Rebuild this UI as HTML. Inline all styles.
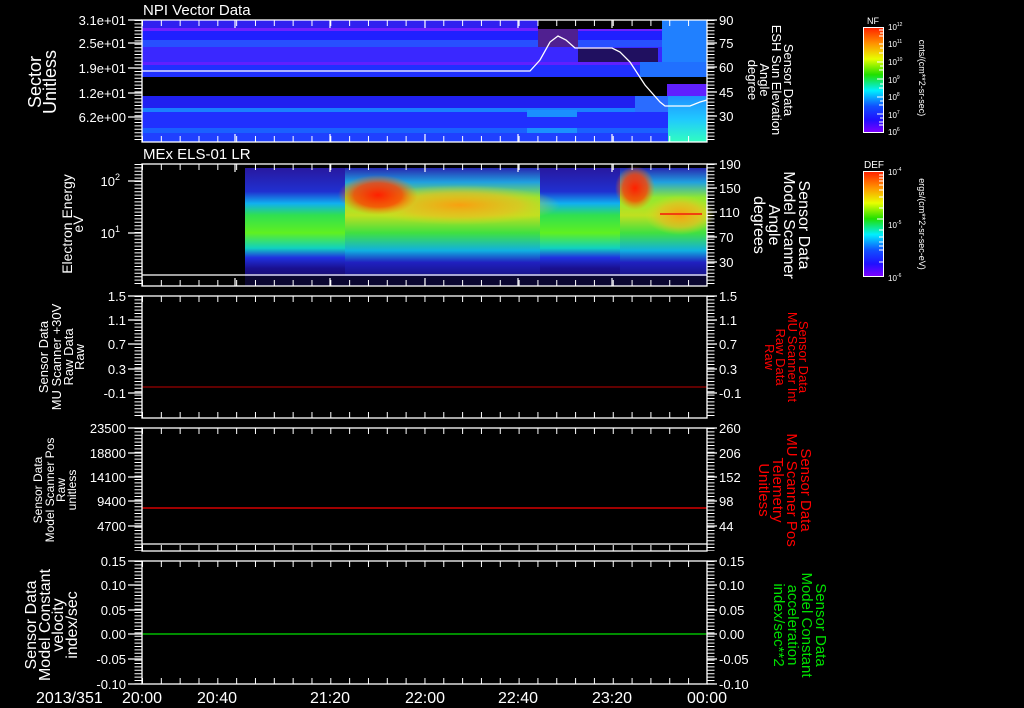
<!DOCTYPE html>
<html><head><meta charset="utf-8"><style>
html,body{margin:0;padding:0;background:#000;width:1024px;height:708px;overflow:hidden}
svg{display:block}
text{font-family:"Liberation Sans",sans-serif;fill:#fff}
</style></head><body>
<svg width="1024" height="708" viewBox="0 0 1024 708" xmlns="http://www.w3.org/2000/svg">
<defs>
<linearGradient id="cb" x1="0" y1="0" x2="0" y2="1">
<stop offset="0" stop-color="#ff2000"/><stop offset="0.15" stop-color="#ff9000"/><stop offset="0.3" stop-color="#e8ff00"/><stop offset="0.45" stop-color="#20e000"/><stop offset="0.6" stop-color="#00f0ff"/><stop offset="0.75" stop-color="#1050ff"/><stop offset="0.88" stop-color="#2010ff"/><stop offset="1" stop-color="#8000ff"/>
</linearGradient>
<linearGradient id="sp1" x1="0" y1="0" x2="0" y2="1">
<stop offset="0" stop-color="#2818a0"/><stop offset="0.2" stop-color="#2030d0"/><stop offset="0.3" stop-color="#10b0f0"/><stop offset="0.4" stop-color="#30e050"/><stop offset="0.55" stop-color="#60f020"/><stop offset="0.68" stop-color="#10d0c0"/><stop offset="0.76" stop-color="#2030e0"/><stop offset="0.85" stop-color="#1a1090"/><stop offset="1" stop-color="#100850"/>
</linearGradient>
<linearGradient id="sp2" x1="0" y1="0" x2="0" y2="1">
<stop offset="0" stop-color="#2828b0"/><stop offset="0.12" stop-color="#20a0e0"/><stop offset="0.25" stop-color="#90e830"/><stop offset="0.4" stop-color="#c0e020"/><stop offset="0.55" stop-color="#40e040"/><stop offset="0.7" stop-color="#10b0e0"/><stop offset="0.8" stop-color="#2020c0"/><stop offset="1" stop-color="#100860"/>
</linearGradient>
<linearGradient id="sph" x1="0" y1="0" x2="1" y2="0">
<stop offset="0" stop-color="#000" stop-opacity="0"/><stop offset="0.5" stop-color="#000" stop-opacity="0"/><stop offset="1" stop-color="#000" stop-opacity="0"/>
</linearGradient>
<radialGradient id="red"><stop offset="0" stop-color="#ff2000"/><stop offset="0.6" stop-color="#ff4000" stop-opacity="0.8"/><stop offset="1" stop-color="#ff8000" stop-opacity="0"/></radialGradient>
<radialGradient id="yel"><stop offset="0" stop-color="#f8a010"/><stop offset="0.6" stop-color="#e8c020" stop-opacity="0.7"/><stop offset="1" stop-color="#d0e020" stop-opacity="0"/></radialGradient>
<linearGradient id="cy" x1="0" y1="0" x2="0" y2="1">
<stop offset="0" stop-color="#2090ff"/><stop offset="0.5" stop-color="#20c8ff"/><stop offset="1" stop-color="#30ffc0"/>
</linearGradient>
</defs>

<!-- Panel 1 data -->
<g>
<rect x="142" y="20" width="565" height="8" fill="#3020f0"/>
<rect x="142" y="28" width="565" height="3" fill="#7020ff"/>
<rect x="142" y="31" width="565" height="9" fill="#2020ff"/>
<rect x="142" y="40" width="565" height="7" fill="#2850ff"/>
<rect x="142" y="47" width="565" height="15" fill="#3a28ff"/>
<rect x="142" y="62" width="565" height="3" fill="#6020ff"/>
<rect x="142" y="65" width="565" height="12" fill="#2030ff"/>
<rect x="142" y="96" width="565" height="12" fill="#2020f0"/>
<rect x="142" y="108" width="565" height="4" fill="#1a80ff"/>
<rect x="142" y="112" width="565" height="16" fill="#2030ff"/>
<rect x="142" y="128" width="565" height="5" fill="#1a60ff"/>
<rect x="142" y="133" width="565" height="9" fill="#2040ff"/>
<rect x="527" y="110" width="50" height="7" fill="#1a90ff"/>
<rect x="527" y="128" width="50" height="5" fill="#1a90ff"/>
<rect x="538" y="20" width="128" height="9" fill="#000"/>
<rect x="538" y="29" width="40" height="18" fill="#502090"/>
<rect x="578" y="48" width="80" height="14" fill="#201060"/>
<rect x="640" y="62" width="67" height="15" fill="#2070ff"/>
<rect x="662" y="20" width="45" height="42" fill="#2080ff"/>
<rect x="667" y="84" width="40" height="12" fill="#6020ff"/>
<rect x="635" y="96" width="72" height="16" fill="#2a6cff"/>
<rect x="668" y="96" width="39" height="46" fill="url(#cy)"/>
<polyline points="142,71 530,71 540,60 550,42 558,36 566,40 575,48 612,48 620,52 630,62 645,85 660,102 665,106 690,106 700,102 707,100" fill="none" stroke="#fff" stroke-width="1.3"/>
</g>

<!-- Panel 2 data -->
<g>
<rect x="245" y="168" width="100" height="118" fill="url(#sp1)"/>
<rect x="345" y="168" width="195" height="118" fill="url(#sp2)"/>
<rect x="540" y="168" width="80" height="118" fill="url(#sp1)"/>
<rect x="620" y="168" width="87" height="118" fill="url(#sp2)"/>
<ellipse cx="460" cy="205" rx="100" ry="20" fill="url(#yel)"/>
<ellipse cx="378" cy="195" rx="40" ry="20" fill="url(#red)"/>
<ellipse cx="635" cy="188" rx="20" ry="22" fill="url(#red)"/>
<ellipse cx="680" cy="215" rx="35" ry="20" fill="url(#yel)"/>
<rect x="660" y="213" width="42" height="2" fill="#f04010"/>
<rect x="245" y="276" width="462" height="10" fill="#0a0630"/>
<line x1="142" y1="275" x2="707" y2="275" stroke="#fff" stroke-width="1.3"/>
</g>

<!-- Data lines -->
<line x1="142" y1="387" x2="707" y2="387" stroke="#c00000" stroke-width="1"/>
<line x1="142" y1="508" x2="707" y2="508" stroke="#ff0000" stroke-width="1.3"/>
<line x1="142" y1="634" x2="707" y2="634" stroke="#00e000" stroke-width="1.3"/>
<line x1="142" y1="544" x2="707" y2="544" stroke="#fff" stroke-width="1.3"/>

<!-- Frames & ticks -->
<g stroke="#fff" fill="none" stroke-width="1.3">
<rect x="142" y="20" width="565" height="122"/>
<rect x="142" y="164" width="565" height="122"/>
<rect x="142" y="296" width="565" height="122"/>
<rect x="142" y="428" width="565" height="123"/>
<rect x="142" y="561" width="565" height="123"/>
</g>
<g stroke="#fff" stroke-width="7" stroke-dasharray="1 2.4">
<line x1="138" y1="20" x2="138" y2="142"/><line x1="711" y1="20" x2="711" y2="142"/>
<line x1="138" y1="164" x2="138" y2="286"/><line x1="711" y1="164" x2="711" y2="286"/>
<line x1="138" y1="296" x2="138" y2="418"/><line x1="711" y1="296" x2="711" y2="418"/>
<line x1="138" y1="428" x2="138" y2="551"/><line x1="711" y1="428" x2="711" y2="551"/>
<line x1="138" y1="561" x2="138" y2="684"/><line x1="711" y1="561" x2="711" y2="684"/>
</g>
<g stroke="#fff" stroke-width="1.2">
<path d="M128 20h14M128 43h14M128 68h14M128 93h14M128 117h14M707 20h10M707 43h10M707 67h10M707 92h10M707 116h10"/>
<path d="M128 181h14M128 233h14M707 164h10M707 188h10M707 212h10M707 237h10M707 262h10"/>
<path d="M128 296h14M128 320h14M128 344h14M128 369h14M128 393h14M707 296h10M707 320h10M707 344h10M707 369h10M707 393h10"/>
<path d="M128 428h14M128 453h14M128 477h14M128 501h14M128 526h14M707 428h10M707 453h10M707 477h10M707 501h10M707 526h10"/>
<path d="M128 561h14M128 585h14M128 610h14M128 634h14M128 659h14M128 684h14M707 561h10M707 585h10M707 610h10M707 634h10M707 659h10M707 684h10"/>
</g>
<g stroke="#fff" stroke-width="6" stroke-dasharray="1 17.83">
<line x1="142" y1="23" x2="707" y2="23"/><line x1="142" y1="139" x2="707" y2="139"/>
<line x1="142" y1="167" x2="707" y2="167"/><line x1="142" y1="283" x2="707" y2="283"/>
<line x1="142" y1="299" x2="707" y2="299"/><line x1="142" y1="415" x2="707" y2="415"/>
<line x1="142" y1="431" x2="707" y2="431"/><line x1="142" y1="548" x2="707" y2="548"/>
<line x1="142" y1="564" x2="707" y2="564"/><line x1="142" y1="681" x2="707" y2="681"/>
</g>
<g stroke="#fff" stroke-width="1.2">
<path d="M235 20v8M330 20v8M425 20v8M518 20v8M612 20v8M235 142v-8M330 142v-8M425 142v-8M518 142v-8M612 142v-8"/>
<path d="M235 164v8M330 164v8M425 164v8M518 164v8M612 164v8M235 286v-8M330 286v-8M425 286v-8M518 286v-8M612 286v-8"/>
</g>

<!-- Titles -->
<text x="143" y="15" font-size="15">NPI Vector Data</text>
<text x="143" y="159" font-size="15">MEx ELS-01 LR</text>

<!-- Left tick labels -->
<g font-size="13" text-anchor="end">
<text x="126" y="25">3.1e+01</text><text x="126" y="48">2.5e+01</text><text x="126" y="73">1.9e+01</text><text x="126" y="98">1.2e+01</text><text x="126" y="122">6.2e+00</text>
<text x="120" y="186">10<tspan font-size="9" dy="-6">2</tspan></text><text x="120" y="238">10<tspan font-size="9" dy="-6">1</tspan></text>
<text x="126" y="301">1.5</text><text x="126" y="325">1.1</text><text x="126" y="349">0.7</text><text x="126" y="374">0.3</text><text x="126" y="398">-0.1</text>
<text x="126" y="433">23500</text><text x="126" y="458">18800</text><text x="126" y="482">14100</text><text x="126" y="506">9400</text><text x="126" y="531">4700</text>
<text x="126" y="566">0.15</text><text x="126" y="590">0.10</text><text x="126" y="615">0.05</text><text x="126" y="639">0.00</text><text x="126" y="664">-0.05</text><text x="126" y="689">-0.10</text>
</g>
<!-- Right tick labels -->
<g font-size="13">
<text x="719" y="25">90</text><text x="719" y="48">75</text><text x="719" y="72">60</text><text x="719" y="97">45</text><text x="719" y="121">30</text>
<text x="719" y="169">190</text><text x="719" y="193">150</text><text x="719" y="217">110</text><text x="719" y="242">70</text><text x="719" y="267">30</text>
<text x="719" y="301">1.5</text><text x="719" y="325">1.1</text><text x="719" y="349">0.7</text><text x="719" y="374">0.3</text><text x="719" y="398">-0.1</text>
<text x="719" y="433">260</text><text x="719" y="458">206</text><text x="719" y="482">152</text><text x="719" y="506">98</text><text x="719" y="531">44</text>
<text x="719" y="566">0.15</text><text x="719" y="590">0.10</text><text x="719" y="615">0.05</text><text x="719" y="639">0.00</text><text x="719" y="664">-0.05</text><text x="719" y="689">-0.10</text>
</g>

<!-- Left axis titles -->
<g text-anchor="middle">
<g font-size="18"><text transform="translate(41,82) rotate(-90)">Sector</text><text transform="translate(56,82) rotate(-90)">Unitless</text></g>
<g font-size="14"><text transform="translate(72,224) rotate(-90)">Electron Energy</text><text transform="translate(83,224) rotate(-90)">eV</text></g>
<g font-size="13"><text transform="translate(48,357) rotate(-90)">Sensor Data</text><text transform="translate(61,357) rotate(-90)">MU Scanner +30V</text><text transform="translate(73,357) rotate(-90)">Raw Data</text><text transform="translate(84,357) rotate(-90)">Raw</text></g>
<g font-size="12"><text transform="translate(42,490) rotate(-90)">Sensor Data</text><text transform="translate(54,490) rotate(-90)">Model Scanner Pos</text><text transform="translate(65,490) rotate(-90)">Raw</text><text transform="translate(76,490) rotate(-90)">unitless</text></g>
<g font-size="16"><text transform="translate(36,625) rotate(-90)">Sensor Data</text><text transform="translate(50,625) rotate(-90)">Model Constant</text><text transform="translate(63,625) rotate(-90)">velocity</text><text transform="translate(77,625) rotate(-90)">index/sec</text></g>
</g>
<!-- Right axis titles -->
<g text-anchor="middle">
<g font-size="13"><text transform="translate(784,80) rotate(90)">Sensor Data</text><text transform="translate(772,80) rotate(90)">ESH Sun Elevation</text><text transform="translate(760,80) rotate(90)">Angle</text><text transform="translate(748,80) rotate(90)">degree</text></g>
<g font-size="16"><text transform="translate(799,225) rotate(90)">Sensor Data</text><text transform="translate(784,225) rotate(90)">Model Scanner</text><text transform="translate(769,225) rotate(90)">Angle</text><text transform="translate(754,225) rotate(90)">degrees</text></g>
<g font-size="13"><text style="fill:#ff0000" transform="translate(799,357) rotate(90)">Sensor Data</text><text style="fill:#ff0000" transform="translate(788,357) rotate(90)">MU Scanner Int</text><text style="fill:#ff0000" transform="translate(776,357) rotate(90)">Raw Data</text><text style="fill:#ff0000" transform="translate(765,357) rotate(90)">Raw</text></g>
<g font-size="15"><text style="fill:#ff0000" transform="translate(801,490) rotate(90)">Sensor Data</text><text style="fill:#ff0000" transform="translate(787,490) rotate(90)">MU Scanner Pos</text><text style="fill:#ff0000" transform="translate(773,490) rotate(90)">Telemetry</text><text style="fill:#ff0000" transform="translate(759,490) rotate(90)">Unitless</text></g>
<g font-size="15"><text style="fill:#00e000" transform="translate(816,625) rotate(90)">Sensor Data</text><text style="fill:#00e000" transform="translate(802,625) rotate(90)">Model Constant</text><text style="fill:#00e000" transform="translate(788,625) rotate(90)">acceleration</text><text style="fill:#00e000" transform="translate(774,625) rotate(90)">index/sec**2</text></g>
</g>

<!-- Colorbars -->
<rect x="863.5" y="27.5" width="20" height="105" fill="url(#cb)" stroke="#fff" stroke-width="1"/>
<rect x="863.5" y="171.5" width="20" height="105" fill="url(#cb)" stroke="#fff" stroke-width="1"/>
<g stroke="#fff" stroke-width="1">
<path d="M879 30h4M880 33h3M879 36h4M879 44h4M880 48h3M879 53h4M877 62h6M880 66h3M879 70h4M877 79h6M880 84h3M879 88h4M877 97h6M880 101h3M879 105h4M877 114h6M880 118h3M879 122h4M879 125h4"/>
<path d="M879 175h4M879 178h4M879 181h4M879 185h4M879 190h4M879 197h4M879 208h4M877 219h6M879 230h4M879 237h4M879 242h4M879 246h4M879 250h4M879 262h4"/>
</g>
<text x="867" y="24" font-size="9">NF</text>
<text x="864" y="168" font-size="10">DEF</text>
<g font-size="8">
<text x="888" y="30">10<tspan font-size="5" dy="-4">12</tspan></text>
<text x="888" y="47">10<tspan font-size="5" dy="-4">11</tspan></text>
<text x="888" y="65">10<tspan font-size="5" dy="-4">10</tspan></text>
<text x="888" y="83">10<tspan font-size="5" dy="-4">9</tspan></text>
<text x="888" y="100">10<tspan font-size="5" dy="-4">8</tspan></text>
<text x="888" y="118">10<tspan font-size="5" dy="-4">7</tspan></text>
<text x="888" y="135">10<tspan font-size="5" dy="-4">6</tspan></text>
<text x="888" y="175">10<tspan font-size="5" dy="-4">-4</tspan></text>
<text x="888" y="228">10<tspan font-size="5" dy="-4">-5</tspan></text>
<text x="888" y="281">10<tspan font-size="5" dy="-4">-6</tspan></text>
</g>
<g font-size="9" text-anchor="middle">
<text transform="translate(919,78) rotate(90)">cnts/(cm**2-sr-sec)</text>
<text transform="translate(919,224) rotate(90)">ergs/(cm**2-sr-sec-eV)</text>
</g>

<!-- Bottom time labels -->
<g font-size="16">
<text x="36" y="703">2013/351</text>
<text x="142" y="703" text-anchor="middle">20:00</text>
<text x="217" y="703" text-anchor="middle">20:40</text>
<text x="330" y="703" text-anchor="middle">21:20</text>
<text x="425" y="703" text-anchor="middle">22:00</text>
<text x="518" y="703" text-anchor="middle">22:40</text>
<text x="612" y="703" text-anchor="middle">23:20</text>
<text x="707" y="703" text-anchor="middle">00:00</text>
</g>
</svg>
</body></html>
